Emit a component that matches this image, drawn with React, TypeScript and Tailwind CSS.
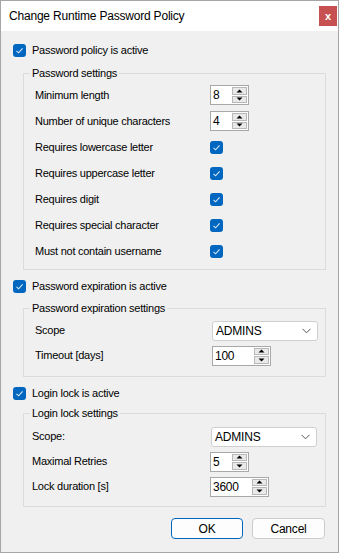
const font = { fontFamily: '"Liberation Sans", Arial, sans-serif' };

const Check = () => (
    <span className="flex h-[13px] w-[13px] shrink-0 items-center justify-center rounded-[3px] bg-[#0067c0]">
        <svg width="9" height="9" viewBox="0 0 9 9">
            <path d="M1.5 4.8 L3.6 6.8 L7.6 2.4" fill="none" stroke="#d8e8f8" strokeWidth="1.1" />
        </svg>
    </span>
);

const Arrow = ({ up }: { up?: boolean }) => (
    <svg width="7" height="4" viewBox="0 0 7 4">
        <path d={up ? "M0.5 3.5 L3.5 0.5 L6.5 3.5 Z" : "M0.5 0.5 L3.5 3.5 L6.5 0.5 Z"} fill="#000" />
    </svg>
);

const Spin = ({ value, wide }: { value: string; wide?: boolean }) => (
    <div className={`flex h-[20px] border border-[#a8a8a8] bg-white ${wide ? "w-[59px]" : "w-[39px]"}`}>
        <span className="flex-1 pl-[2px] text-[12px] leading-[18px]">{value}</span>
        <div className="my-px mr-px flex w-[15px] flex-col gap-px">
            <span className="flex flex-1 items-center justify-center border border-[#b8b8b8] bg-[#e9e9e9]">
                <Arrow up />
            </span>
            <span className="flex flex-1 items-center justify-center border border-[#b8b8b8] bg-[#e9e9e9]">
                <Arrow />
            </span>
        </div>
    </div>
);

const Select = () => (
    <div className="flex h-[20px] w-[106px] items-center justify-between rounded-[3px] border border-[#cfcfcf] bg-white pl-[3px] pr-[6px]">
        <span className="text-[12px] tracking-[-0.2px]">ADMINS</span>
        <svg width="9" height="6" viewBox="0 0 9 6">
            <path d="M0.5 0.8 L4.5 4.8 L8.5 0.8" fill="none" stroke="#555" strokeWidth="1" />
        </svg>
    </div>
);

const Toggle = ({ label, className }: { label: string; className: string }) => (
    <div className={`flex h-[18px] items-center gap-[6px] pl-[12px] ${className}`}>
        <Check />
        <span>{label}</span>
    </div>
);

const Row = ({ label, children }: { label: string; children: React.ReactNode }) => (
    <div className="grid h-[26px] grid-cols-[175px_1fr] items-center">
        <span>{label}</span>
        <div className="flex">{children}</div>
    </div>
);

const Row25 = ({ label, children }: { label: string; children: React.ReactNode }) => (
    <div className="grid h-[25px] grid-cols-[175px_1fr] items-center">
        <span>{label}</span>
        <div className="flex">{children}</div>
    </div>
);

export default function App() {
    return (
        <div
            style={font}
            className="flex h-[553px] w-[339px] flex-col border border-[#a6a6a6] bg-[#f0f0f0] text-[11px] tracking-[-0.25px] text-black"
        >
            <div className="flex h-[30px] shrink-0 items-center justify-between bg-white pl-[8px] pr-[1px]">
                <span className="text-[12px] tracking-[-0.2px]">Change Runtime Password Policy</span>
                <span className="flex h-[20px] w-[18px] items-center justify-center bg-[#c75050] text-[11px] font-bold leading-none text-white">
                    x
                </span>
            </div>

            <Toggle label="Password policy is active" className="mt-[10px]" />
            <fieldset className="ml-[22px] mt-[7px] w-[303px] border border-[#dcdcdc] pb-[5px] pl-[11px] pt-[2px]">
                <legend className="-ml-[5px] px-[2px] leading-[14px]">Password settings</legend>
                <Row label="Minimum length">
                    <Spin value="8" />
                </Row>
                <Row label="Number of unique characters">
                    <Spin value="4" />
                </Row>
                <Row label="Requires lowercase letter">
                    <Check />
                </Row>
                <Row label="Requires uppercase letter">
                    <Check />
                </Row>
                <Row label="Requires digit">
                    <Check />
                </Row>
                <Row label="Requires special character">
                    <Check />
                </Row>
                <Row label="Must not contain username">
                    <Check />
                </Row>
            </fieldset>

            <Toggle label="Password expiration is active" className="mt-[7px]" />
            <fieldset className="ml-[22px] mt-[6px] w-[303px] border border-[#dcdcdc] pb-[8px] pl-[11px] pt-[3px]">
                <legend className="-ml-[5px] px-[2px] leading-[14px]">Password expiration settings</legend>
                <Row25 label="Scope">
                    <span className="ml-[2px]">
                        <Select />
                    </span>
                </Row25>
                <Row25 label="Timeout [days]">
                    <span className="ml-[2px]">
                        <Spin value="100" wide />
                    </span>
                </Row25>
            </fieldset>

            <Toggle label="Login lock is active" className="mt-[7px]" />
            <fieldset className="ml-[22px] mt-[4px] w-[303px] border border-[#dcdcdc] pb-[7px] pl-[8px] pt-[4px]">
                <legend className="-ml-[2px] px-[2px] leading-[14px]">Login lock settings</legend>
                <div className="grid h-[25px] grid-cols-[178px_1fr] items-center">
                    <span>Scope:</span>
                    <div className="ml-px flex">
                        <Select />
                    </div>
                </div>
                <div className="grid h-[25px] grid-cols-[178px_1fr] items-center">
                    <span>Maximal Retries</span>
                    <div className="flex">
                        <Spin value="5" />
                    </div>
                </div>
                <div className="grid h-[25px] grid-cols-[178px_1fr] items-center">
                    <span>Lock duration [s]</span>
                    <div className="flex">
                        <Spin value="3600" wide />
                    </div>
                </div>
            </fieldset>

            <div className="mr-[13px] mt-[11px] flex justify-end gap-[9px]">
                <button className="h-[21px] w-[72px] rounded-[4px] border border-[#0067c0] bg-[#fdfdfd] text-[12px] tracking-[-0.2px]">
                    OK
                </button>
                <button className="h-[21px] w-[73px] rounded-[4px] border border-[#cccccc] bg-[#fdfdfd] text-[12px] tracking-[-0.2px]">
                    Cancel
                </button>
            </div>
        </div>
    );
}
